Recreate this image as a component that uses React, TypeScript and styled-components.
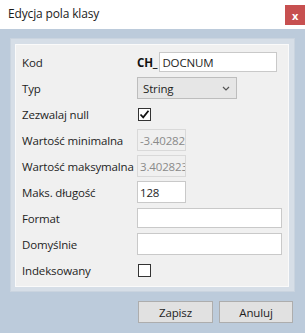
import React from 'react'
import styled, { createGlobalStyle } from 'styled-components'

const GlobalStyle = createGlobalStyle`
  html, body {
    margin: 0;
    padding: 0;
    background: #bccbdb;
  }
  body {
    font-family: 'Open Sans', 'Noto Sans', sans-serif;
    font-size: 11.5px;
    letter-spacing: -0.15px;
    color: #1e1e1e;
  }
`

const Window = styled.div`
  width: 305px;
  height: 333px;
  display: flex;
  flex-direction: column;
  background: #bccbdb;
  overflow: hidden;
`

const TitleBar = styled.div`
  height: 29px;
  flex: none;
  display: flex;
  align-items: flex-start;
  background: #ffffff;
`

const Title = styled.div`
  padding: 5px 0 0 8px;
  font-size: 12px;
  color: #1a1a1a;
`

const CloseButton = styled.div`
  margin: 5px 0 0 auto;
  width: 20px;
  height: 20px;
  display: flex;
  align-items: center;
  justify-content: center;
  background: #c75050;
  color: #ffffff;
  font-size: 11px;
  font-weight: 700;
  line-height: 1;
`

const Body = styled.div`
  flex: 1;
  display: flex;
  flex-direction: column;
  padding: 9px 10px 0 10px;
`

const Frame = styled.div`
  background: #d6dee7;
  border: 1px solid #cad4df;
  padding: 5px 5px 4px 4px;
`

const Panel = styled.div`
  background: #f0f0f0;
  border: 1px solid #fafafa;
  padding: 4px 6px 3px 6px;
  display: grid;
  grid-template-columns: 115px 1fr;
  grid-auto-rows: 26px;
  align-items: center;
`

const Label = styled.div`
  color: #1e1e1e;
  white-space: nowrap;
`

const Cell = styled.div`
  display: flex;
  align-items: center;
`

const Prefix = styled.span`
  font-weight: 700;
  margin-right: 2px;
  color: #111;
`

const Input = styled.div<{ $width?: number; $disabled?: boolean; $h?: number }>`
  box-sizing: border-box;
  width: ${p => (p.$width ? `${p.$width}px` : '100%')};
  height: ${p => p.$h ?? 21}px;
  border: 1px solid ${p => (p.$disabled ? '#d9d9d9' : '#c9c9c9')};
  background: ${p => (p.$disabled ? '#f0f0f0' : '#ffffff')};
  color: ${p => (p.$disabled ? '#8a8a8a' : '#1e1e1e')};
  padding: 0 2px;
  display: flex;
  align-items: center;
  overflow: hidden;
  white-space: nowrap;
`

const Select = styled.div`
  box-sizing: border-box;
  width: 100px;
  height: 22px;
  border: 1px solid #bdbdbd;
  background: #e6e6e6;
  display: flex;
  align-items: center;
  justify-content: space-between;
  padding: 0 6px 0 5px;
`

const Check = styled.div`
  box-sizing: border-box;
  width: 13px;
  height: 13px;
  margin-left: 1px;
  border: 1px solid #333;
  background: #fff;
  display: flex;
  align-items: center;
  justify-content: center;
`

const Buttons = styled.div`
  display: flex;
  justify-content: flex-end;
  gap: 6px;
  padding: 9px 2px 0 0;
`

const Button = styled.div<{ $width: number }>`
  box-sizing: border-box;
  width: ${p => p.$width}px;
  height: 22px;
  border: 1px solid #adadad;
  background: #e1e1e1;
  display: flex;
  align-items: center;
  justify-content: center;
  color: #1e1e1e;
`

const Chevron = () => (
  <svg width="8" height="5" viewBox="0 0 8 5">
    <path d="M1 1 L4 4 L7 1" fill="none" stroke="#555" strokeWidth="1.2" />
  </svg>
)

const Tick = () => (
  <svg width="11" height="11" viewBox="0 0 11 11">
    <path d="M1.5 5.5 L4.2 8.3 L9.5 1.8" fill="none" stroke="#111" strokeWidth="1.8" />
  </svg>
)

export default function App() {
  return (
    <Window>
      <GlobalStyle />
      <TitleBar>
        <Title>Edycja pola klasy</Title>
        <CloseButton>x</CloseButton>
      </TitleBar>
      <Body>
        <Frame>
          <Panel>
            <Label>Kod</Label>
            <Cell>
              <Prefix>CH_</Prefix>
              <Input $width={118} $h={20}>DOCNUM</Input>
            </Cell>

            <Label>Typ</Label>
            <Cell>
              <Select>
                <span>String</span>
                <Chevron />
              </Select>
            </Cell>

            <Label>Zezwalaj null</Label>
            <Cell>
              <Check><Tick /></Check>
            </Cell>

            <Label>Wartość minimalna</Label>
            <Cell>
              <Input $width={49} $h={22} $disabled>-3.40282</Input>
            </Cell>

            <Label>Wartość maksymalna</Label>
            <Cell>
              <Input $width={49} $h={22} $disabled>3.402823</Input>
            </Cell>

            <Label>Maks. długość</Label>
            <Cell>
              <Input $width={49} $h={22}>128</Input>
            </Cell>

            <Label>Format</Label>
            <Cell>
              <Input $h={20} />
            </Cell>

            <Label>Domyślnie</Label>
            <Cell>
              <Input $h={22} />
            </Cell>

            <Label>Indeksowany</Label>
            <Cell>
              <Check />
            </Cell>
          </Panel>
        </Frame>
        <Buttons>
          <Button $width={75}>Zapisz</Button>
          <Button $width={74}>Anuluj</Button>
        </Buttons>
      </Body>
    </Window>
  )
}
